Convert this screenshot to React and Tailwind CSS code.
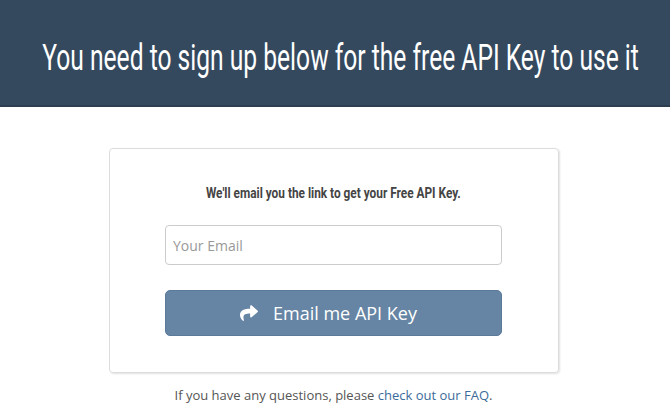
import React from "react";
import { FaShare } from "react-icons/fa";

export default function App() {
  return (
    <div className="w-[670px] h-[411px] bg-white overflow-hidden" style={{ fontFamily: '"Open Sans", sans-serif' }}>
      <div className="h-[107px] bg-[#34495e] border-b-2 border-[#2c3e50] flex items-center justify-center overflow-hidden">
        <h1
          className="text-white text-[37px] font-normal leading-none mt-[9px] ml-[11px] whitespace-nowrap scale-x-[0.665] origin-center shrink-0"
          style={{ fontFamily: 'Roboto, sans-serif' }}
        >
          You need to sign up below for the free API Key to use it
        </h1>
      </div>
      <div className="flex flex-col items-center pt-[41px] pr-[3px]">
        <div className="w-[450px] h-[225px] border border-[#dcdcdc] rounded-[4px] shadow-[1px_1px_2px_rgba(0,0,0,0.12)] flex flex-col items-center pt-[37px]">
          <p
            className="text-[#444] text-[15px] font-bold leading-none whitespace-nowrap scale-x-[0.79] origin-center"
            style={{ fontFamily: 'Roboto, sans-serif' }}
          >
            We'll email you the link to get your Free API Key.
          </p>
          <input
            className="mt-[24px] w-[337px] h-[40px] border border-[#ccc] rounded-[4px] px-[7px] text-[14px] text-[#555] placeholder:text-[#999] outline-none"
            placeholder="Your Email"
          />
          <button className="mt-[25px] w-[337px] h-[46px] bg-[#6685a4] rounded-[5px] flex items-center justify-center gap-[15px] pr-[10px] text-white text-[18px] border border-[#5b7999]">
            <FaShare className="w-[18px] h-[18px]" />
            <span>Email me API Key</span>
          </button>
        </div>
        <p className="mt-[13px] text-[13px] text-[#555]">
          If you have any questions, please <a className="text-[#3b6b9a]">check out our FAQ</a>.
        </p>
      </div>
    </div>
  );
}
